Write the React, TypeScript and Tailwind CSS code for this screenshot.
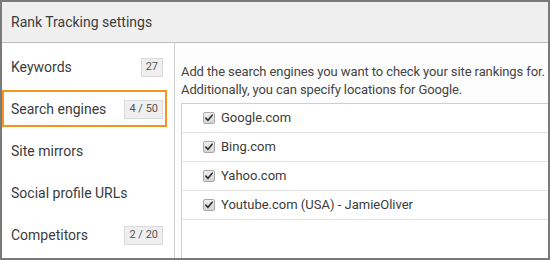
import React from 'react';

interface NavItem {
  label: string;
  badge?: string;
  active?: boolean;
}

const navItems: NavItem[] = [
  { label: 'Keywords', badge: '27' },
  { label: 'Search engines', badge: '4 / 50', active: true },
  { label: 'Site mirrors' },
  { label: 'Social profile URLs' },
  { label: 'Competitors', badge: '2 / 20' },
];

const engines = ['Google.com', 'Bing.com', 'Yahoo.com', 'Youtube.com (USA) - JamieOliver'];

const CheckBox: React.FC = () => (
  <span className="flex h-[12px] w-[12px] shrink-0 items-center justify-center rounded-[2px] border border-[#a9a9a9] bg-gradient-to-b from-[#f0f0f0] to-[#d4d4d4]">
    <svg viewBox="0 0 12 12" className="h-[10px] w-[10px]">
      <path d="M2.2 6.2 L4.8 8.8 L9.8 2.6" fill="none" stroke="#333" strokeWidth={2} strokeLinecap="round" strokeLinejoin="round" />
    </svg>
  </span>
);

const App: React.FC = () => {
  return (
    <div
      className="flex h-[260px] w-[550px] flex-col overflow-hidden border-2 border-[#7a7a7a] bg-white text-[#3c3c3c]"
      style={{ fontFamily: 'Roboto, "Liberation Sans", sans-serif' }}
    >
      <div className="flex h-[41px] shrink-0 items-center border-b border-[#bdbdbd] bg-[#efefef] pl-[9px] pt-[1px] text-[14px]">
        Rank Tracking settings
      </div>

      <div className="flex min-h-0 flex-1">
        {/* left menu */}
        <div className="flex w-[173px] shrink-0 flex-col gap-[5px] border-r border-[#d0d0d0] pt-[5px]">
          {navItems.map((item) => (
            <div
              key={item.label}
              className={`flex h-[37px] w-[165px] items-center justify-between border-2 pl-[7px] pr-[2px] pt-[1px] text-[14px] ${
                item.active ? 'border-[#f7941d]' : 'border-transparent'
              }`}
            >
              <span>{item.label}</span>
              {item.badge && (
                <span className="flex h-[19px] items-center border border-[#dadada] bg-[#efefef] px-[4px] text-[11px] text-[#555]">
                  {item.badge}
                </span>
              )}
            </div>
          ))}
        </div>

        {/* right panel */}
        <div className="flex min-w-0 flex-1 flex-col bg-[#fdfdfd] pl-[6px] pt-[20px]">
          <p className="whitespace-nowrap text-[13px] leading-[18px] tracking-[-0.1px] text-[#444]">
            Add the search engines you want to check your site rankings for.
            <br />
            Additionally, you can specify locations for Google.
          </p>
          <div className="mt-[4px] flex-1 border-l border-t border-[#cfcfcf] bg-white">
            {engines.map((name) => (
              <div key={name} className="flex h-[29px] items-center gap-[6px] border-b border-[#e2e2e2] pl-[21px] text-[13px]">
                <CheckBox />
                <span>{name}</span>
              </div>
            ))}
          </div>
        </div>
      </div>
    </div>
  );
};

export default App;
